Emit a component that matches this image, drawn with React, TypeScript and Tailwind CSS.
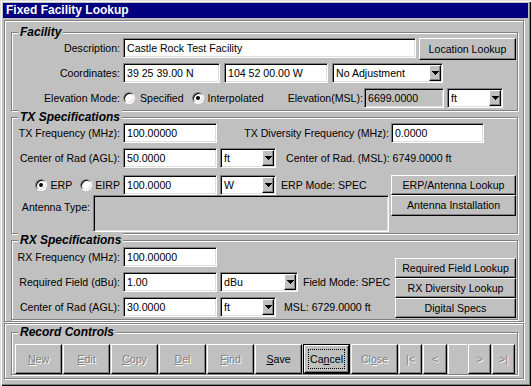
import React from 'react';

const sunken =
  'border border-t-[#808080] border-l-[#808080] border-r-white border-b-white shadow-[inset_1px_1px_0_#000,inset_-1px_-1px_0_#dfdfdf]';
const raised =
  'border border-t-white border-l-white border-r-black border-b-black shadow-[inset_-1px_-1px_0_#808080]';
const etched = 'border border-[#808080] shadow-[inset_1px_1px_0_#fff,1px_1px_0_#fff]';
const greyed = 'text-[#808080] [text-shadow:1px_1px_0_#fff]';

function Arrow() {
  return (
    <svg width="7" height="4" viewBox="0 0 7 4">
      <path d="M0 0h7v1h-1v1h-1v1h-1v1h-1v-1h-1v-1h-1v-1h-1z" fill="#000" />
    </svg>
  );
}

function Label({ w, children }: { w: string; children: React.ReactNode }) {
  return <span className={`${w} h-[20px] shrink-0 flex items-center justify-end whitespace-nowrap`}>{children}</span>;
}

function TextBox({ value, className, disabled }: { value?: string; className: string; disabled?: boolean }) {
  return (
    <div
      className={`${sunken} h-[20px] shrink-0 flex items-center pl-[3px] overflow-hidden whitespace-nowrap ${
        disabled ? 'bg-[#c0c0c0]' : 'bg-white'
      } ${className}`}
    >
      {value}
    </div>
  );
}

function Select({ value, className }: { value: string; className: string }) {
  return (
    <div className={`${sunken} h-[20px] shrink-0 flex items-center bg-white pl-[3px] pr-[1px] ${className}`}>
      <span className="flex-1 whitespace-nowrap">{value}</span>
      <span className={`${raised} bg-[#c0c0c0] w-[12px] h-[16px] flex items-center justify-center`}>
        <Arrow />
      </span>
    </div>
  );
}

function Radio({ checked }: { checked?: boolean }) {
  return (
    <span
      className={`w-[12px] h-[12px] shrink-0 rounded-full bg-white ${sunken} flex items-center justify-center`}
    >
      {checked && <span className="w-[4px] h-[4px] rounded-full bg-black" />}
    </span>
  );
}

function Button({ className, children }: { className: string; children: React.ReactNode }) {
  return (
    <div className={`${raised} bg-[#c0c0c0] shrink-0 flex items-center justify-center whitespace-nowrap ${className}`}>
      {children}
    </div>
  );
}

function Group({ title, className, children }: { title: string; className: string; children: React.ReactNode }) {
  return (
    <div className={`${etched} relative w-[507px] ${className}`}>
      <span className="absolute left-[6px] top-[-8px] px-[2px] bg-[#c0c0c0] text-[12px] leading-[14px] font-bold italic">
        {title}
      </span>
      {children}
    </div>
  );
}

export default function App() {
  return (
    <div className="w-[531px] h-[386px] bg-[#c0c0c0] p-[3px] overflow-hidden font-['Liberation_Sans',Arial,sans-serif] text-[10.6px] leading-[13px] text-black shadow-[inset_1px_1px_0_#dfdfdf,inset_2px_2px_0_#fff,inset_-1px_-1px_0_#000,inset_-2px_-2px_0_#808080]">
      <div className="h-[15px] bg-[#000080] text-white font-bold text-[12px] leading-[15px] pl-[3px]">
        Fixed Facility Lookup
      </div>

      <div className={`${etched} mt-[2px] ml-[1px] w-[520px] pt-[11px] pl-[6px] pb-[1px]`}>
        {/* Facility */}
        <Group title="Facility" className="pt-[5px] pb-[2px]">
          <div className="flex items-start">
            <Label w="w-[108px]">Description:</Label>
            <TextBox className="ml-[3px] w-[293px]" value="Castle Rock Test Facility" />
            <Button className="ml-[3px] w-[97px] h-[22px]">Location Lookup</Button>
          </div>
          <div className="flex items-center mt-[3px]">
            <Label w="w-[108px]">Coordinates:</Label>
            <TextBox className="ml-[3px] w-[97px]" value="39 25 39.00 N" />
            <TextBox className="ml-[4px] w-[104px]" value="104 52 00.00 W" />
            <Select className="ml-[4px] w-[111px]" value="No Adjustment" />
          </div>
          <div className="flex items-center mt-[5px]">
            <Label w="w-[108px]">Elevation Mode:</Label>
            <span className="ml-[3px]">
              <Radio />
            </span>
            <span className="ml-[5px]">Specified</span>
            <span className="ml-[8px]">
              <Radio checked />
            </span>
            <span className="ml-[4px]">Interpolated</span>
            <span className="flex-1" />
            <span>Elevation(MSL):</span>
            <TextBox className="ml-[1px] w-[80px]" value="6699.0000" disabled />
            <Select className="ml-[3px] mr-[14px] w-[56px]" value="ft" />
          </div>
        </Group>

        {/* TX Specifications */}
        <Group title="TX Specifications" className="mt-[6px] pt-[5px] pb-[1px]">
          <div className="flex items-center">
            <Label w="w-[108px]">TX Frequency (MHz):</Label>
            <TextBox className="ml-[3px] w-[94px]" value="100.00000" />
            <span className="flex-1" />
            <span>TX Diversity Frequency (MHz):</span>
            <TextBox className="ml-[2px] mr-[33px] w-[93px]" value="0.0000" />
          </div>
          <div className="flex items-center mt-[5px]">
            <Label w="w-[108px]">Center of Rad (AGL):</Label>
            <TextBox className="ml-[3px] w-[94px]" value="50.0000" />
            <Select className="ml-[3px] w-[56px]" value="ft" />
            <span className="ml-[10px]">Center of Rad. (MSL): 6749.0000 ft</span>
          </div>
          <div className="flex items-start mt-[7px]">
            <div className="w-[377px]">
              <div className="flex items-center">
                <span className="w-[108px] h-[20px] flex items-center justify-end">
                  <Radio checked />
                  <span className="ml-[3px]">ERP</span>
                  <span className="ml-[8px]">
                    <Radio />
                  </span>
                  <span className="ml-[3px]">EIRP</span>
                </span>
                <TextBox className="ml-[3px] w-[94px]" value="100.0000" />
                <Select className="ml-[3px] w-[56px]" value="W" />
                <span className="ml-[5px]">ERP Mode: SPEC</span>
              </div>
              <div className="flex items-start">
                <span className="w-[78px] pt-[6px] text-right">Antenna Type:</span>
                <div className={`${sunken} ml-[3px] w-[296px] h-[37px] bg-[#c0c0c0]`} />
              </div>
            </div>
            <div className="ml-[2px] flex flex-col">
              <Button className="w-[125px] h-[20px]">ERP/Antenna Lookup</Button>
              <Button className="w-[125px] h-[21px]">Antenna Installation</Button>
            </div>
          </div>
        </Group>

        {/* RX Specifications */}
        <Group title="RX Specifications" className="mt-[6px] pt-[6px] pb-[1px] flex items-start">
          <div className="flex flex-col">
            <div className="flex items-center">
              <Label w="w-[108px]">RX Frequency (MHz):</Label>
              <TextBox className="ml-[3px] w-[94px]" value="100.00000" />
            </div>
            <div className="flex items-center mt-[5px]">
              <Label w="w-[108px]">Required Field (dBu):</Label>
              <TextBox className="ml-[3px] w-[94px]" value="1.00" />
              <Select className="ml-[3px] w-[78px]" value="dBu" />
              <span className="ml-[5px]">Field Mode: SPEC</span>
            </div>
            <div className="flex items-center mt-[5px]">
              <Label w="w-[108px]">Center of Rad (AGL):</Label>
              <TextBox className="ml-[3px] w-[94px]" value="30.0000" />
              <Select className="ml-[3px] w-[56px]" value="ft" />
              <span className="ml-[8px]">MSL: 6729.0000 ft</span>
            </div>
          </div>
          <div className="ml-auto mr-[1px] mt-[11px] flex flex-col">
            <Button className="w-[121px] h-[20px]">Required Field Lookup</Button>
            <Button className="w-[121px] h-[20px]">RX Diversity Lookup</Button>
            <Button className="w-[121px] h-[20px]">Digital Specs</Button>
          </div>
        </Group>
      </div>

      {/* Record Controls */}
      <div className={`${etched} mt-[1px] ml-[1px] w-[520px] pt-[8px] pl-[6px] pb-[3px]`}>
        <Group title="Record Controls" className="pt-[11px] pl-[3px]">
          <div className="flex gap-[1px]">
            <Button className={`w-[47px] h-[30px] ${greyed}`}>
              <u>N</u>ew
            </Button>
            <Button className={`w-[47px] h-[30px] ${greyed}`}>
              <u>E</u>dit
            </Button>
            <Button className={`w-[47px] h-[30px] ${greyed}`}>
              <u>C</u>opy
            </Button>
            <Button className={`w-[47px] h-[30px] ${greyed}`}>
              <u>D</u>el
            </Button>
            <Button className={`w-[47px] h-[30px] ${greyed}`}>
              <u>F</u>ind
            </Button>
            <Button className="w-[47px] h-[30px]">
              <u>S</u>ave
            </Button>
            <div className="w-[47px] h-[30px] shrink-0 border border-black flex">
              <div className={`${raised} flex-1 flex`}>
                <span className="m-[3px] flex-1 border border-dotted border-black flex items-center justify-center">
                  Ca<u>n</u>cel
                </span>
              </div>
            </div>
            <Button className={`w-[47px] h-[30px] ${greyed}`}>
              Cl<u>o</u>se
            </Button>
            <Button className={`w-[23px] h-[30px] ${greyed}`}>|&lt;</Button>
            <Button className={`w-[24px] h-[30px] ${greyed}`}>&lt;</Button>
            <div className="w-[19px] h-[30px] shrink-0 border-t border-l border-white" />
            <Button className={`w-[23px] h-[30px] ${greyed}`}>&gt;</Button>
            <Button className={`w-[23px] h-[30px] ${greyed}`}>&gt;|</Button>
          </div>
        </Group>
      </div>
    </div>
  );
}
